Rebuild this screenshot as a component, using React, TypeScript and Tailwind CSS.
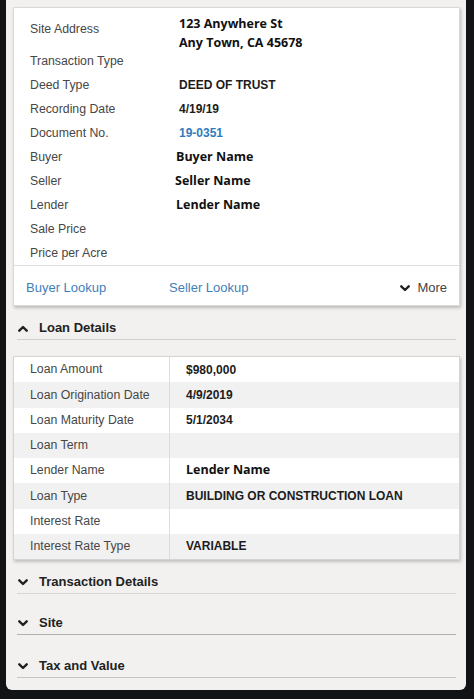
import React from 'react';

type Row = { label: string; value?: string; kind?: 'plain' | 'name' | 'link'; shift?: string };

const saleRows: Row[] = [
  { label: 'Transaction Type' },
  { label: 'Deed Type', value: 'DEED OF TRUST' },
  { label: 'Recording Date', value: '4/19/19' },
  { label: 'Document No.', value: '19-0351', kind: 'link' },
  { label: 'Buyer', value: 'Buyer Name', kind: 'name', shift: 'ml-[-3px]' },
  { label: 'Seller', value: 'Seller Name', kind: 'name', shift: 'ml-[-4px]' },
  { label: 'Lender', value: 'Lender Name', kind: 'name', shift: 'ml-[-3px]' },
  { label: 'Sale Price' },
  { label: 'Price per Acre' },
];

const loanRows: Row[] = [
  { label: 'Loan Amount', value: '$980,000' },
  { label: 'Loan Origination Date', value: '4/9/2019' },
  { label: 'Loan Maturity Date', value: '5/1/2034' },
  { label: 'Loan Term' },
  { label: 'Lender Name', value: 'Lender Name', kind: 'name' },
  { label: 'Loan Type', value: 'BUILDING OR CONSTRUCTION LOAN' },
  { label: 'Interest Rate' },
  { label: 'Interest Rate Type', value: 'VARIABLE' },
];

const Chevron: React.FC<{ up?: boolean; className?: string }> = ({ up, className }) => (
  <svg viewBox="0 0 10 7" className={className} fill="none" stroke="currentColor" strokeWidth={2.4} strokeLinecap="round" strokeLinejoin="round">
    <polyline points={up ? '1.3,5.7 5,2 8.7,5.7' : '1.3,1.3 5,5 8.7,1.3'} />
  </svg>
);

const valueClass = (kind?: Row['kind']) => {
  if (kind === 'name') return "font-['Open_Sans',sans-serif] font-bold text-[12.5px] text-[#111]";
  if (kind === 'link') return "font-['Liberation_Sans',Arial,sans-serif] font-bold text-[12px] text-[#2f7bbf]";
  return "font-['Liberation_Sans',Arial,sans-serif] font-bold text-[12px] text-[#1c1c1c]";
};

const SectionHeader: React.FC<{ title: string; open?: boolean; pad: string; line?: string }> = ({ title, open, pad, line }) => (
  <div className={`${pad} pb-[3px] ml-[11px] mr-[10px] border-b ${line ?? 'border-[#cfcfcf]'} flex items-center`}>
    <Chevron up={open} className="w-[10px] h-[7px] ml-[1px] text-[#222]" />
    <span className="ml-[11px] leading-[16px] text-[13px] font-bold text-[#222] font-['Liberation_Sans',Arial,sans-serif]">
      {title}
    </span>
  </div>
);

export default function App() {
  return (
    <div className="w-[474px] h-[699px] bg-[#121314] pl-[6px] pr-[8px] pb-[9px] overflow-hidden font-['Liberation_Sans',Arial,sans-serif]">
      <div className="h-full bg-[#f2f1ef] rounded-b-[6px] pt-[7px]">
        {/* sale card */}
        <div className="ml-[7px] mr-[6px] bg-white border border-[#d9d9d9] shadow-[1px_2px_3px_rgba(0,0,0,0.22)]">
          <div className="pt-[6px] pl-[16px]">
            <div className="flex h-[35px]">
              <div className="w-[149px] mt-[8px] leading-[14px] text-[12.3px] text-[#474747]">Site Address</div>
              <div className="leading-[19px] font-['Open_Sans',sans-serif] font-bold text-[12.5px] text-[#111]">
                <div>123 Anywhere St</div>
                <div>Any Town, CA 45678</div>
              </div>
            </div>
            {saleRows.map((r) => (
              <div key={r.label} className="flex items-center h-[24px]">
                <div className="w-[149px] text-[12.3px] text-[#474747]">{r.label}</div>
                {r.value && <div className={`${valueClass(r.kind)} ${r.shift ?? ''}`}>{r.value}</div>}
              </div>
            ))}
          </div>
          <div className="border-t border-[#dedede] flex items-start pt-[15px] pb-[10px] pl-[12px] pr-[12px] leading-[14px] text-[13px]">
            <span className="text-[#3f80ba] w-[143px]">Buyer Lookup</span>
            <span className="text-[#3f80ba]">Seller Lookup</span>
            <span className="ml-auto flex items-center text-[#444]">
              <Chevron className="w-[10px] h-[7px] mr-[7px] text-[#222]" />
              More
            </span>
          </div>
        </div>

        <SectionHeader title="Loan Details" open pad="pt-[14px]" />

        {/* loan table */}
        <div className="mt-[16px] ml-[7px] mr-[6px] bg-white border border-[#d4d4d4] shadow-[1px_2px_3px_rgba(0,0,0,0.2)]">
          {loanRows.map((r, i) => (
            <div key={r.label} className={`flex h-[25.25px] ${i % 2 === 1 ? 'bg-[#f1f1f1]' : 'bg-white'}`}>
              <div className="w-[156px] pl-[16px] flex items-center border-r border-[#dcdcdc] text-[12.3px] text-[#474747]">{r.label}</div>
              <div className={`pl-[16px] flex items-center ${valueClass(r.kind)}`}>{r.value}</div>
            </div>
          ))}
        </div>

        <SectionHeader title="Transaction Details" pad="pt-[14px]" line="border-[#d6d6d6]" />
        <SectionHeader title="Site" pad="pt-[21px]" line="border-[#b0b0b0]" />
        <SectionHeader title="Tax and Value" pad="pt-[23px]" line="border-[#c4c4c4]" />
      </div>
    </div>
  );
}
